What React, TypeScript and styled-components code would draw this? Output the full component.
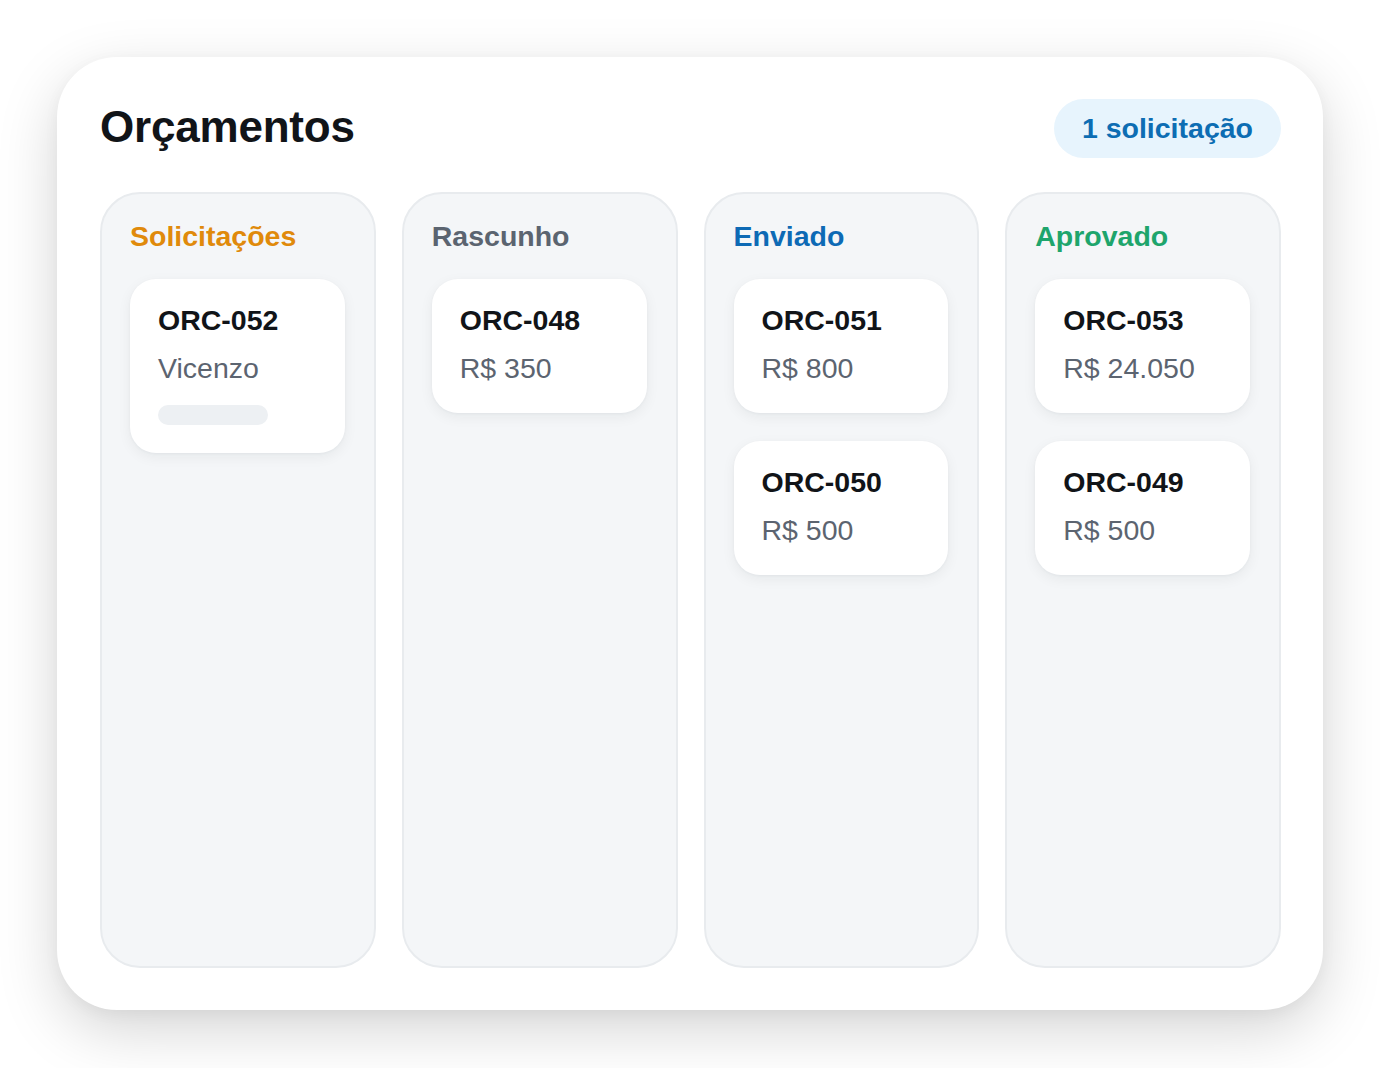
import React from 'react';
import styled, { createGlobalStyle } from 'styled-components';

const GlobalStyle = createGlobalStyle`
  html, body {
    margin: 0;
    padding: 0;
    background: #ffffff;
  }
  body {
    font-family: "Liberation Sans", Arial, sans-serif;
    -webkit-font-smoothing: antialiased;
  }
`;

const Page = styled.div`
  width: 1380px;
  height: 1068px;
  padding: 57px;
  box-sizing: border-box;
  background: #ffffff;
  overflow: hidden;
`;

const Board = styled.div`
  height: 953px;
  box-sizing: border-box;
  padding: 42px 42px 42px 43px;
  background: #ffffff;
  border-radius: 60px;
  box-shadow: 0 20px 60px rgba(0, 0, 0, 0.17), 0 4px 16px rgba(0, 0, 0, 0.04);
  display: flex;
  flex-direction: column;
  gap: 34px;
`;

const Header = styled.div`
  display: flex;
  align-items: center;
  justify-content: space-between;
  height: 59px;
`;

const Title = styled.h1`
  margin: 0 0 4px;
  font-size: 44px;
  font-weight: 700;
  color: #111418;
  letter-spacing: -0.2px;
`;

const Badge = styled.span`
  display: inline-flex;
  align-items: center;
  height: 59px;
  padding: 0 28px;
  border-radius: 30px;
  background: #e7f4fd;
  color: #0d6db3;
  font-size: 28.5px;
  font-weight: 700;
`;

const Columns = styled.div`
  flex: 1;
  display: grid;
  grid-template-columns: repeat(4, 1fr);
  gap: 26px;
`;

const Column = styled.div`
  background: #f4f6f8;
  border: 2px solid #e8ebee;
  border-radius: 40px;
  padding: 25px 29px 25px 28px;
  display: flex;
  flex-direction: column;
  gap: 28px;
`;

const ColumnTitle = styled.h2<{ $tone: string }>`
  margin: 0 0 -2px;
  font-size: 28.5px;
  line-height: 34px;
  font-weight: 700;
  color: ${p => p.$tone};
`;

const Card = styled.div`
  background: #ffffff;
  border-radius: 26px;
  padding: 24px 28px 28px;
  box-shadow: 0 4px 14px rgba(20, 30, 40, 0.06), 0 1px 3px rgba(20, 30, 40, 0.04);
  display: flex;
  flex-direction: column;
  gap: 14px;
`;

const Code = styled.div`
  font-size: 28.5px;
  line-height: 34px;
  font-weight: 700;
  color: #111418;
`;

const Detail = styled.div`
  font-size: 28.5px;
  line-height: 34px;
  color: #5c6470;
`;

const Placeholder = styled.div`
  width: 110px;
  height: 20px;
  margin-top: 6px;
  border-radius: 10px;
  background: #edf0f3;
`;

type Quote = { code: string; detail: string; pending?: boolean };

const columns: { title: string; tone: string; items: Quote[] }[] = [
  { title: 'Solicitações', tone: '#e08a0b', items: [{ code: 'ORC-052', detail: 'Vicenzo', pending: true }] },
  { title: 'Rascunho', tone: '#5b6470', items: [{ code: 'ORC-048', detail: 'R$ 350' }] },
  {
    title: 'Enviado',
    tone: '#0d6ab5',
    items: [
      { code: 'ORC-051', detail: 'R$ 800' },
      { code: 'ORC-050', detail: 'R$ 500' }
    ]
  },
  {
    title: 'Aprovado',
    tone: '#1ea56c',
    items: [
      { code: 'ORC-053', detail: 'R$ 24.050' },
      { code: 'ORC-049', detail: 'R$ 500' }
    ]
  }
];

const App = (): React.ReactElement => {
  return (
    <Page>
      <GlobalStyle />
      <Board>
        <Header>
          <Title>Orçamentos</Title>
          <Badge>1 solicitação</Badge>
        </Header>
        <Columns>
          {columns.map(col => (
            <Column key={col.title}>
              <ColumnTitle $tone={col.tone}>{col.title}</ColumnTitle>
              {col.items.map(item => (
                <Card key={item.code}>
                  <Code>{item.code}</Code>
                  <Detail>{item.detail}</Detail>
                  {item.pending && <Placeholder />}
                </Card>
              ))}
            </Column>
          ))}
        </Columns>
      </Board>
    </Page>
  );
};

export default App;
